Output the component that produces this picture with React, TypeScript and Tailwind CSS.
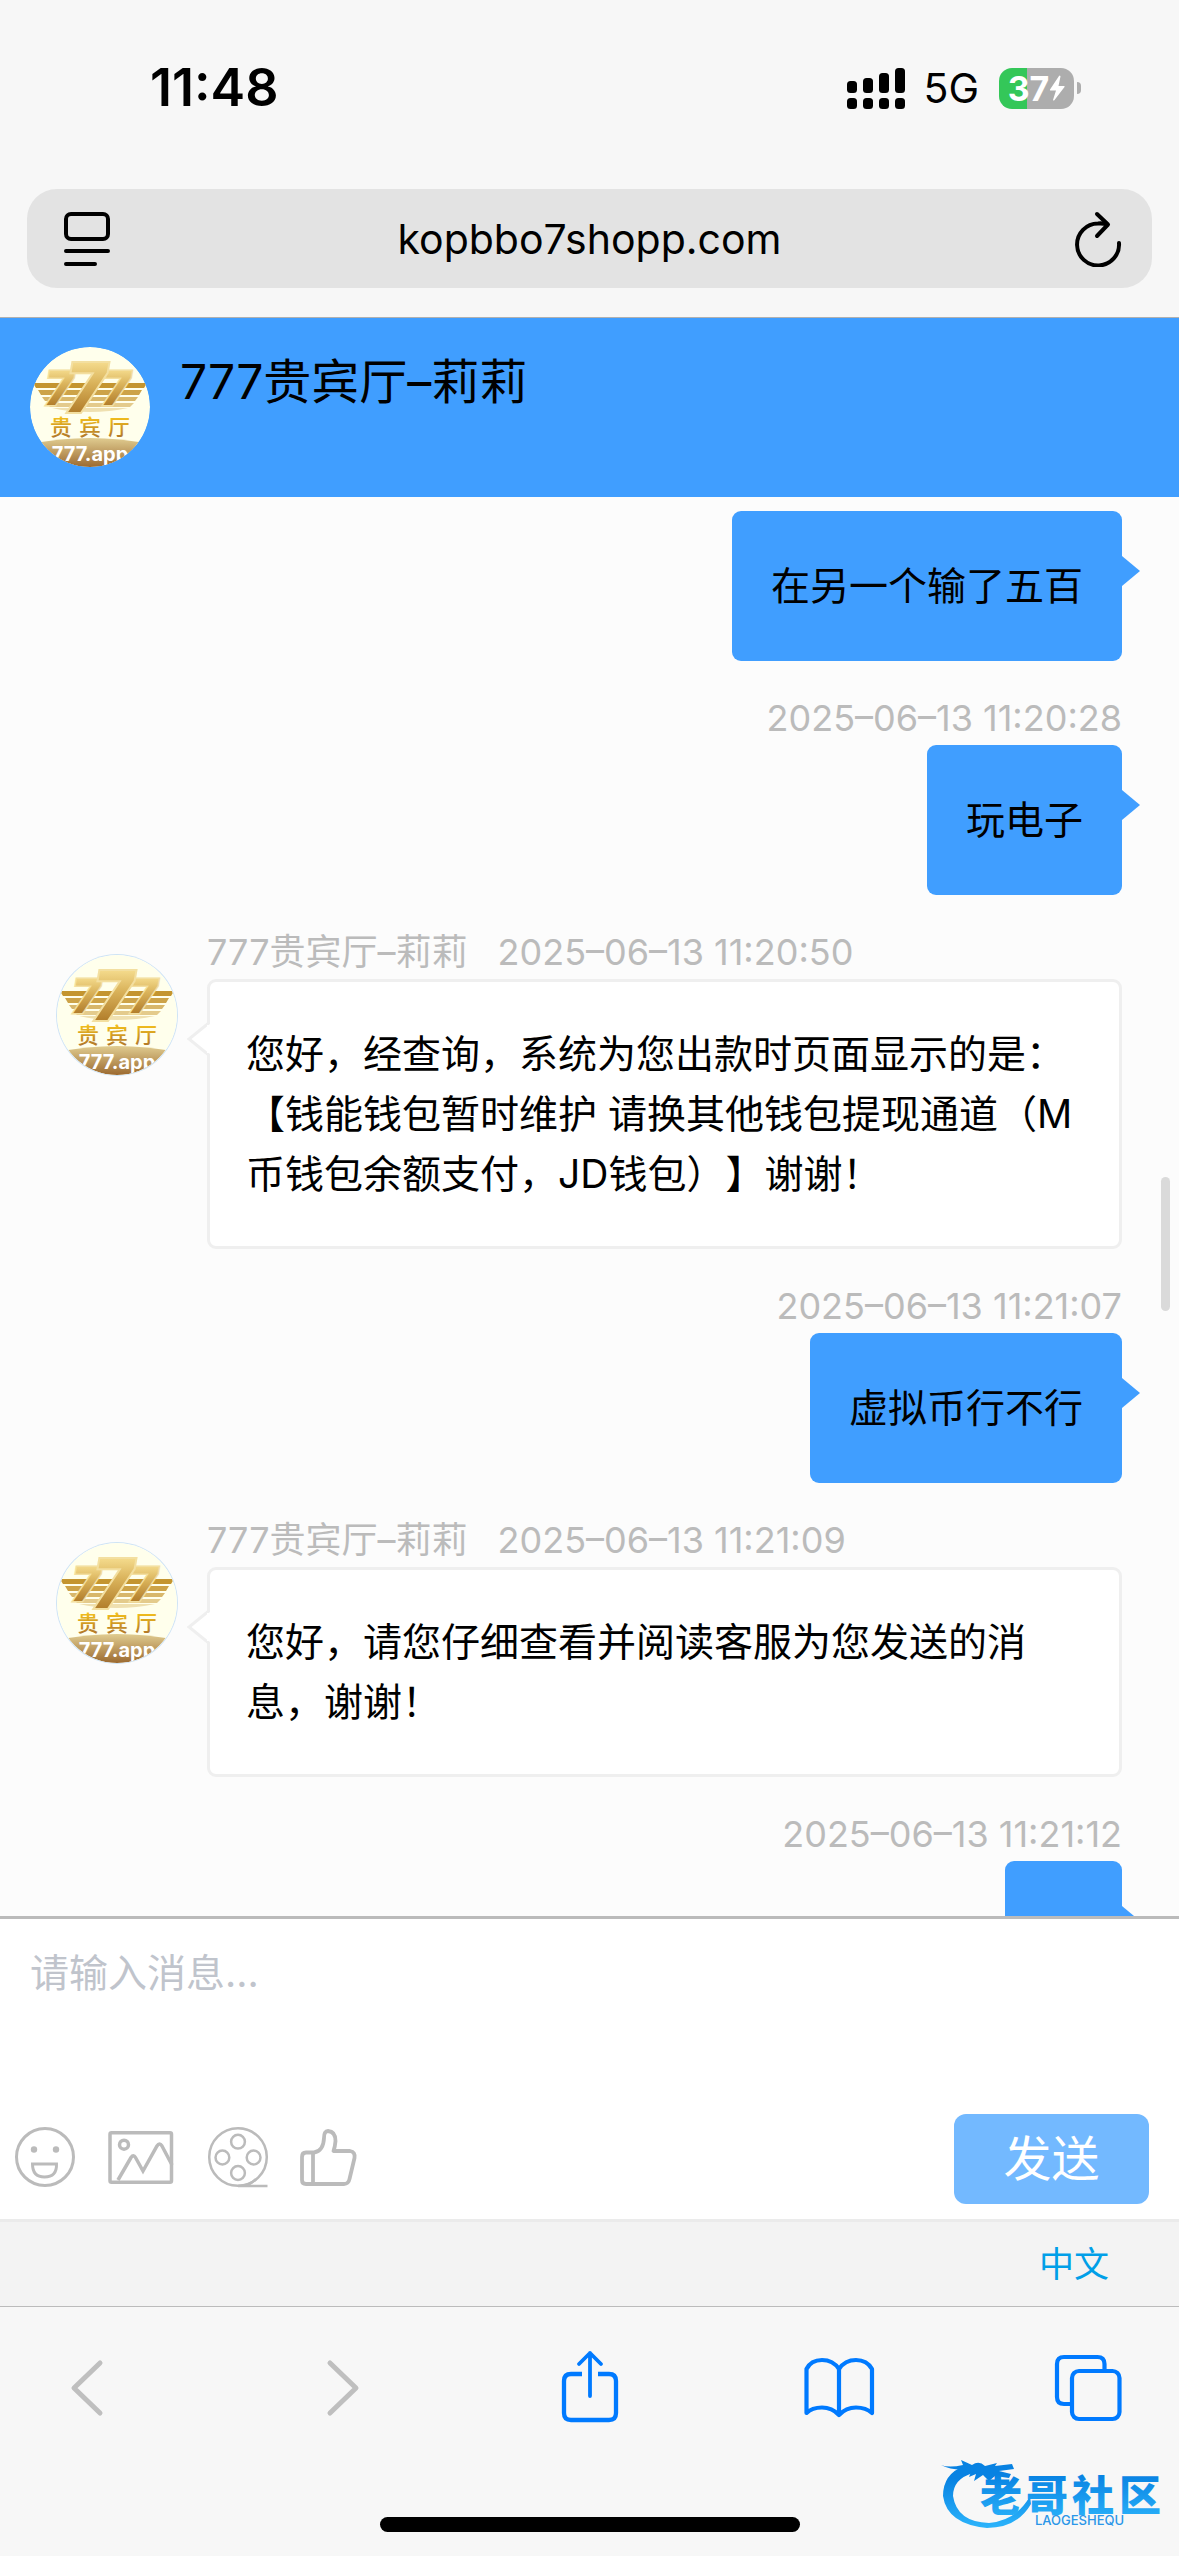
import React, { useId, useState } from "react";

type Message = {
  id: number;
  from: "agent" | "me";
  time?: string;
  text: string;
};

const AGENT = "777贵宾厅–莉莉";

const messages: Message[] = [
  { id: 1, from: "me", text: "在另一个输了五百" },
  { id: 2, from: "me", time: "2025–06–13 11:20:28", text: "玩电子" },
  {
    id: 3,
    from: "agent",
    time: "2025–06–13 11:20:50",
    text: "您好，经查询，系统为您出款时页面显示的是：【钱能钱包暂时维护 请换其他钱包提现通道（M币钱包余额支付，JD钱包）】谢谢！",
  },
  { id: 4, from: "me", time: "2025–06–13 11:21:07", text: "虚拟币行不行" },
  {
    id: 5,
    from: "agent",
    time: "2025–06–13 11:21:09",
    text: "您好，请您仔细查看并阅读客服为您发送的消息，谢谢！",
  },
  { id: 6, from: "me", time: "2025–06–13 11:21:12", text: "你" },
];

const Avatar = ({ className = "" }: { className?: string }) => {
  const id = useId();
  const seven = {
    fontFamily: "Inter, sans-serif",
    fontWeight: 800,
    fontStyle: "italic",
    fill: `url(#${id}g)`,
    stroke: "#f3dfa0",
    paintOrder: "stroke",
  };
  return (
    <svg viewBox="0 0 120 120" className={`size-[120px] shrink-0 rounded-full ${className}`} role="img" aria-label="777贵宾厅">
      <defs>
        <linearGradient id={`${id}g`} x1="0" y1="0" x2="0" y2="1">
          <stop offset="0.200" stopColor="#f3d98a" />
          <stop offset="0.450" stopColor="#d9b25a" />
          <stop offset="0.800" stopColor="#b37f2c" />
        </linearGradient>
        <linearGradient id={`${id}t`} x1="0" y1="0" x2="0" y2="1">
          <stop offset="0.200" stopColor="#f8c51c" />
          <stop offset="0.900" stopColor="#b0762a" />
        </linearGradient>
        <linearGradient id={`${id}b`} x1="0" y1="0" x2="0" y2="1">
          <stop offset="0" stopColor="#e0cc90" />
          <stop offset="1" stopColor="#9c6a30" />
        </linearGradient>
        <clipPath id={`${id}c`}>
          <circle cx="60" cy="60" r="60" />
        </clipPath>
      </defs>
      <g clipPath={`url(#${id}c)`}>
        <rect width="120" height="120" fill="#ffffec" />
        <path d="M3 36H117L114 41H6Z" fill="#c4952f" />
        <path d="M8 43H112L109 48H11Z" fill="#cda348" />
        <path d="M12 50H108L105 54H15Z" fill="#d8b76a" />
        <path d="M16 56H104L100 60H20Z" fill="#e4cb8c" />
        <path d="M22 61H98Q80 65 60 65Q38 65 22 61Z" fill="#efe0b0" />
        <text x="15" y="58" fontSize="47" strokeWidth={3} {...seven}>7</text>
        <text x="72" y="58" fontSize="47" strokeWidth={3} {...seven}>7</text>
        <text x="36" y="65" fontSize="67" strokeWidth={4} {...seven}>7</text>
        <text x="20 49 78" y="88" fontSize="22" fontFamily="Noto Sans CJK SC, sans-serif" fontWeight="500" fill={`url(#${id}t)`}>贵宾厅</text>
        <path d="M0 97Q60 85 120 97V120H0Z" fill={`url(#${id}b)`} />
        <text x="60" y="114" fontSize="20" textAnchor="middle" fontFamily="Inter, sans-serif" fontWeight="700" fill="#fff">777.app</text>
      </g>
    </svg>
  );
};

const StatusBar = () => (
  <div className="flex h-11 items-center justify-between pr-[98px] pl-[150px]">
    <span className="text-[52px] leading-[44px] font-semibold">11:48</span>
    <div className="flex items-center">
      <svg viewBox="0 0 58 41" className="h-[41px] w-[58px]" aria-hidden="true">
        <rect x="0" y="13" width="10" height="12" rx="3.5" />
        <rect x="16" y="10" width="10" height="15" rx="3.5" />
        <rect x="32" y="5" width="10" height="20" rx="3.5" />
        <rect x="48" y="0" width="10" height="25" rx="3.5" />
        <rect x="0" y="30" width="10" height="11" rx="3.5" />
        <rect x="16" y="30" width="10" height="11" rx="3.5" />
        <rect x="32" y="30" width="10" height="11" rx="3.5" />
        <rect x="48" y="30" width="10" height="11" rx="3.5" />
      </svg>
      <span className="ml-[18px] text-[41px] leading-[44px]">5G</span>
      <div className="ml-5 flex h-[41px] w-[75px] items-center justify-center rounded-[13px] bg-[linear-gradient(90deg,#34c759_37%,#adadad_37%)] text-white">
        <span className="text-[34px] leading-[41px] font-bold">37</span>
        <svg viewBox="0 0 16 26" className="h-[26px] w-4" fill="currentColor" aria-hidden="true">
          <path d="M10 1L1 14.500Q0.500 15.500 1.500 15.500H7L4 25Q4.500 26 5.500 25L15.500 12Q16 11 15 11H9.500L11.500 1.500Q11 0 10 1Z" />
        </svg>
      </div>
      <span className="ml-[3px] h-3 w-1 rounded-r-full bg-[#adadad]" />
    </div>
  </div>
);

const AddressBar = () => (
  <div className="mx-[27px] mt-[79px] mb-[29px] flex h-[99px] items-center justify-between rounded-[30px] bg-[#e3e3e3] px-7">
    <button type="button" aria-label="页面设置" className="flex">
      <svg viewBox="-8 0 56 56" className="size-14" fill="none" stroke="#000" strokeWidth="4" strokeLinecap="round">
        <rect x="3" y="3" width="42" height="25" rx="5" />
        <path d="M3 40H45M3 53H32" />
      </svg>
    </button>
    <span className="text-[41px] leading-[60px]">kopbbo7shopp.com</span>
    <button type="button" aria-label="重新加载" className="flex">
      <svg viewBox="-7 0 56 56" className="size-14" fill="none" stroke="#000" strokeWidth="4" strokeLinecap="round" strokeLinejoin="round">
        <path d="M44 32A21 21 0 1 1 23 12.500Q28 12 32 13.500" />
        <path d="M22 3L33 13.500L22 25" />
      </svg>
    </button>
  </div>
);

const Sent = ({ message }: { message: Message }) => (
  <li className="flex flex-col items-end pl-[207px]">
    {message.time && <time className="mt-[30px] text-[36px] leading-[54px] text-[#bbb]">{message.time}</time>}
    <div className="relative rounded-[9px] bg-[#409eff] px-[39px] py-[45px] text-[39px] leading-[60px]">
      {message.text}
      <svg viewBox="0 0 18 30" className="absolute top-[45px] left-full h-[30px] w-[18px]" aria-hidden="true">
        <path d="M0 0L18 15L0 30Z" fill="#409eff" />
      </svg>
    </div>
  </li>
);

const Received = ({ message }: { message: Message }) => (
  <li className="mt-[30px] flex gap-[30px]">
    <Avatar className="mt-[30px] ring-1 ring-[#cfe4f5]" />
    <div className="min-w-0 flex-1">
      <div className="flex gap-[30px] text-[36px] leading-[54px] text-[#bbb]">
        <span>{AGENT}</span>
        <time>{message.time}</time>
      </div>
      <div className="relative rounded-[9px] border-3 border-[#efefef] bg-white px-9 py-[42px] text-[39px] leading-[60px]">
        {message.text}
        <svg viewBox="0 0 24 36" className="absolute top-[39px] right-full h-9 w-6" fill="#fff" stroke="#efefef" strokeWidth="3" aria-hidden="true">
          <path d="M24 1L3 18L24 35" />
        </svg>
        <span className="absolute top-[43px] -left-[3px] h-7 w-[3px] bg-white" />
      </div>
    </div>
  </li>
);

const Composer = () => {
  const [draft, setDraft] = useState("");
  return (
    <form className="shrink-0 border-t-3 border-b-3 border-t-[#bbb] border-b-[#ebebeb] bg-white" onSubmit={(e) => e.preventDefault()}>
      <textarea
        aria-label="消息"
        placeholder="请输入消息..."
        value={draft}
        onChange={(e) => setDraft(e.target.value)}
        className="block h-[195px] w-full resize-none px-[30px] py-6 text-[39px] leading-[60px] outline-none placeholder:text-[#c0c4cc]"
      />
      <div className="flex items-center justify-between pr-[30px] pb-[15px] pl-[9px]">
        <div className="flex gap-[22px] text-[#bbb]">
          <button type="button" aria-label="表情">
            <svg viewBox="0 0 72 72" className="size-[72px]" fill="none" stroke="currentColor" strokeWidth="3">
              <circle cx="36" cy="34" r="28.5" />
              <path d="M23.500 41H47.500Q48 54 35.500 54Q23.500 54 23.500 41Z" />
              <circle cx="25" cy="26.500" r="3.200" fill="currentColor" stroke="none" />
              <circle cx="47" cy="26.500" r="3.200" fill="currentColor" stroke="none" />
            </svg>
          </button>
          <button type="button" aria-label="图片">
            <svg viewBox="0 0 72 72" className="size-[72px]" fill="none" stroke="currentColor" strokeWidth="3.500">
              <rect x="7" y="9.700" width="61.500" height="49.600" rx="1.500" />
              <circle cx="21" cy="21.700" r="4.500" />
              <path d="M15 57L28 34.500Q30.500 31 32.500 34.500L40 48L54 23Q56.500 19 59 23L69 42" />
            </svg>
          </button>
          <button type="button" aria-label="视频">
            <svg viewBox="0 0 72 72" className="size-[72px]" fill="none" stroke="currentColor" strokeWidth="2.500">
              <circle cx="41" cy="34" r="28.800" />
              <circle cx="41" cy="18.700" r="6.900" />
              <circle cx="25.400" cy="34.500" r="6.900" />
              <circle cx="56.600" cy="34.500" r="6.900" />
              <circle cx="41" cy="50" r="6.900" />
              <path d="M41 63H70.500M41 63Q53 63 59 56" />
            </svg>
          </button>
          <button type="button" aria-label="评价">
            <svg viewBox="0 0 72 72" className="size-[72px]" fill="none" stroke="currentColor" strokeWidth="3.800" strokeLinejoin="round">
              <path d="M15 29.500H23Q32.500 28 33 15Q33 8 37 8Q44.500 8.500 44.500 18Q44 24 42.500 28H59Q64.500 29 63.500 35L58.500 56Q57.500 61 53 61H15Q11 61 11 57V34Q11 29.500 15 29.500Z" />
              <path d="M22 29.500V61" />
            </svg>
          </button>
        </div>
        <button type="submit" className="h-[90px] w-[195px] rounded-xl bg-[#73b9ff] text-[48px] leading-[72px] text-white">
          发送
        </button>
      </div>
    </form>
  );
};

const Watermark = () => (
  <svg viewBox="0 0 224 80" className="absolute right-[16px] bottom-[22px] h-20 w-[224px]" role="img" aria-label="老哥社区">
    <defs>
      <linearGradient id="wm" x1="0" y1="0" x2="0" y2="1">
        <stop offset="0.200" stopColor="#0882e2" />
        <stop offset="1" stopColor="#2cb4fb" />
      </linearGradient>
    </defs>
    <path d="M25 12Q4 20 4 42Q8 70 48 74Q78 74 92 50L91 42Q78 66 50 69Q18 68 14 42Q14 25 34 19Z" fill="url(#wm)" />
    <path d="M2 11Q10 14 24 11L22 6L33 11Q40 6 46 12L58 9L56 12L73 10L75 15L60 17L72 20L70 24L56 22L50 27L44 21L35 27L37 20L30 23L32 18L20 22Q22 16 30 15Q14 17 2 11Z" fill="#0882e2" />
    <text x="41 87 133 180" y="57" fontSize="42" fontWeight="900" fontFamily="Noto Sans CJK SC, sans-serif" fill="url(#wm)">老哥社区</text>
    <text x="96" y="71" fontSize="13" fontWeight="500" fontFamily="Inter, sans-serif" fill="#2a96e8">LAOGESHEQU</text>
  </svg>
);

const Toolbar = () => (
  <nav className="relative shrink-0 border-t border-[#bbb] bg-[#f7f7f7]">
    <div className="flex justify-between px-[54px] pt-[43px] text-[#007aff]">
      <button type="button" aria-label="后退" disabled className="text-[#bfbfbf]">
        <svg viewBox="0 0 68 76" className="h-[76px] w-[68px]" fill="none" stroke="currentColor" strokeWidth="5" strokeLinecap="round" strokeLinejoin="round">
          <path d="M46 13L20 38L46 63" />
        </svg>
      </button>
      <button type="button" aria-label="前进" disabled className="text-[#bfbfbf]">
        <svg viewBox="0 0 68 76" className="h-[76px] w-[68px]" fill="none" stroke="currentColor" strokeWidth="5" strokeLinecap="round" strokeLinejoin="round">
          <path d="M25 13L51 38L25 63" />
        </svg>
      </button>
      <button type="button" aria-label="分享">
        <svg viewBox="0 0 68 76" className="h-[76px] w-[68px]" fill="none" stroke="currentColor" strokeWidth="4.300" strokeLinecap="round" strokeLinejoin="round">
          <path d="M26 24H15Q8 24 8 31V63Q8 70 15 70H53Q60 70 60 63V31Q60 24 53 24H42" strokeLinecap="butt" />
          <path d="M34 46V3M23 14L34 3L45 14" strokeWidth="3.800" />
        </svg>
      </button>
      <button type="button" aria-label="书签">
        <svg viewBox="2 0 68 76" className="h-[76px] w-[68px] overflow-visible" fill="none" stroke="currentColor" strokeWidth="4.200" strokeLinecap="round" strokeLinejoin="round">
          <path d="M35 63V19Q29 10 18 10Q7 10 2.500 19V63Q8 57.500 18 57.500Q28 57.500 35 65Q42 57.500 52 57.500Q62 57.500 68 63V19Q63 10 52 10Q41 10 35 19" />
        </svg>
      </button>
      <button type="button" aria-label="标签页">
        <svg viewBox="0 0 68 76" className="h-[76px] w-[68px] overflow-visible" fill="none" stroke="currentColor" strokeWidth="4.200">
          <path d="M47.500 20V14Q47.500 7 40.500 7H7Q0 7 0 14V47Q0 54 7 54H14" />
          <rect x="15" y="21" width="47.500" height="48" rx="7" />
        </svg>
      </button>
    </div>
    <div className="mx-auto mt-[91px] mb-6 h-[15px] w-[420px] rounded-full bg-black" />
    <Watermark />
  </nav>
);

const App = () => {
  return (
    <div className="flex h-screen flex-col bg-[#fcfcfc] font-['Inter','Noto_Sans_CJK_SC',sans-serif] text-black [text-spacing-trim:space-all]">
      <div className="shrink-0 border-b border-[#b0b0b0] bg-[#f7f7f7] pt-[66px]">
        <StatusBar />
        <AddressBar />
      </div>

      <header className="flex shrink-0 items-start gap-[30px] bg-[#409eff] px-[30px] pt-[29px] pb-[30px]">
        <Avatar />
        <h1 className="text-[48px] leading-[70px]">{AGENT}</h1>
      </header>

      <main className="relative min-h-0 flex-1 overflow-hidden">
        <ul className="pt-[14px] pr-[57px] pl-[57px]">
          {messages.map((m) => (m.from === "me" ? <Sent key={m.id} message={m} /> : <Received key={m.id} message={m} />))}
        </ul>
        <div className="absolute top-[680px] right-[9px] h-[134px] w-[9px] rounded-full bg-[#dadada]" />
      </main>

      <Composer />
      <div className="flex shrink-0 justify-end bg-[#f3f3f3] px-[70px] py-3">
        <a href="#lang" className="text-[35px] leading-[60px] text-[#009fe8]">中文</a>
      </div>
      <Toolbar />
    </div>
  );
};

export default App;
